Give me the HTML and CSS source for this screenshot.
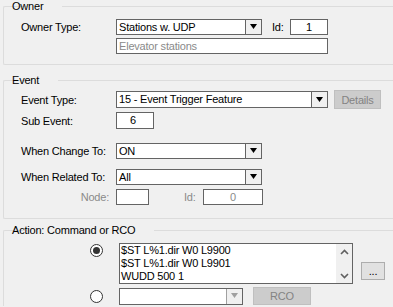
FILE: index.html
```html
<!DOCTYPE html>
<html lang="en">

<head>
    <meta charset="UTF-8">
    <title>Event Trigger</title>
    <link rel="stylesheet" href="styles.css">
</head>

<body>
    <fieldset class="group owner">
        <legend>Owner</legend>
        <div class="row">
            <span class="label">Owner Type:</span>
            <div class="combo w-146">
                <span class="combo-text">Stations w. UDP</span>
                <span class="combo-btn"><svg width="7" height="6" viewBox="0 0 7 6"><path d="M0 0h7L3.5 5z" fill="#000"/></svg></span>
            </div>
            <span class="id-label">Id:</span>
            <div class="box id-box">1</div>
        </div>
        <div class="row row-desc">
            <div class="box desc">Elevator stations</div>
        </div>
    </fieldset>

    <fieldset class="group event">
        <legend>Event</legend>
        <div class="row">
            <span class="label">Event Type:</span>
            <div class="combo w-211 tall">
                <span class="combo-text">15 - Event Trigger Feature</span>
                <span class="combo-btn"><svg width="7" height="6" viewBox="0 0 7 6"><path d="M0 0h7L3.5 5z" fill="#000"/></svg></span>
            </div>
            <button class="btn disabled details">Details</button>
        </div>
        <div class="row">
            <span class="label">Sub Event:</span>
            <div class="box sub-box">6</div>
        </div>
        <div class="row spaced">
            <span class="label">When Change To:</span>
            <div class="combo w-146">
                <span class="combo-text">ON</span>
                <span class="combo-btn"><svg width="7" height="6" viewBox="0 0 7 6"><path d="M0 0h7L3.5 5z" fill="#000"/></svg></span>
            </div>
        </div>
        <div class="row spaced2">
            <span class="label">When Related To:</span>
            <div class="combo w-146">
                <span class="combo-text">All</span>
                <span class="combo-btn"><svg width="7" height="6" viewBox="0 0 7 6"><path d="M0 0h7L3.5 5z" fill="#000"/></svg></span>
            </div>
        </div>
        <div class="row">
            <span class="label muted right">Node:</span>
            <div class="box node-box"></div>
            <span class="muted node-id">Id:</span>
            <div class="box zero-box">0</div>
        </div>
    </fieldset>

    <fieldset class="group action">
        <legend>Action: Command or RCO</legend>
        <div class="row cmd-row">
            <span class="radio checked"></span>
            <div class="box cmd">
                <div class="cmd-text">$ST L%1.dir W0 L9900<br>$ST L%1.dir W0 L9901<br>WUDD 500 1</div>
                <div class="scroll">
                    <svg width="9" height="6" viewBox="0 0 9 6"><path d="M1 5L4.5 1.5L8 5" fill="none" stroke="#606060" stroke-width="1.6"/></svg>
                    <svg width="9" height="6" viewBox="0 0 9 6"><path d="M1 1L4.5 4.5L8 1" fill="none" stroke="#606060" stroke-width="1.6"/></svg>
                </div>
            </div>
            <button class="btn dots">...</button>
        </div>
        <div class="row rco-row">
            <span class="radio"></span>
            <div class="combo w-123 tall">
                <span class="combo-text"></span>
                <span class="combo-btn off"><svg width="7" height="6" viewBox="0 0 7 6"><path d="M0 0h7L3.5 5z" fill="#a0a0a0"/></svg></span>
            </div>
            <button class="btn disabled rco">RCO</button>
        </div>
    </fieldset>
</body>

</html>
```

FILE: styles.css
```css
body {
    margin: 0;
    width: 393px;
    height: 307px;
    overflow: hidden;
    background-color: #f0f0f0;
    font-family: "Liberation Sans", Arial, sans-serif;
    font-size: 11px;
    letter-spacing: -0.2px;
    color: #000;
}

.group {
    margin: 0 0 0 3px;
    width: 390px;
    padding: 0 0 0 17px;
    border: 1px solid #dcdcdc;
    border-right: none;
    border-radius: 2px 0 0 2px;
    box-sizing: border-box;
}

.group legend {
    padding: 0 2px;
    margin-left: 6px;
    line-height: 13px;
    position: relative;
    left: -17px;
    margin-right: -17px;
}

.owner {
    margin-top: 0;
    padding-top: 6px;
    padding-bottom: 10px;
}

.event {
    margin-top: 9px;
    padding-top: 3px;
    padding-bottom: 10px;
}

.action {
    margin-top: 5px;
    padding-top: 6px;
    height: 82px;
    border-bottom: none;
    border-radius: 2px 0 0 0;
}

.row {
    display: flex;
    align-items: center;
    margin-bottom: 3px;
}

.row-desc {
    padding-left: 95px;
    margin-bottom: 0;
}

.spaced {
    margin-top: 14px;
    margin-bottom: 10px;
}

.spaced2 {
    margin-bottom: 4px;
}

.label {
    width: 95px;
    flex: none;
}

.right {
    width: 88px;
    text-align: right;
    margin-right: 7px;
}

.muted {
    color: #8a8a8a;
}

.box {
    box-sizing: border-box;
    height: 16px;
    border: 1px solid #646464;
    background-color: #fff;
    line-height: 14px;
    padding: 0 2px;
    flex: none;
}

.combo {
    box-sizing: border-box;
    height: 16px;
    border: 1px solid #646464;
    background-color: #fff;
    display: flex;
    flex: none;
}

.combo.tall {
    height: 17px;
}

.combo-text {
    flex: 1;
    padding-left: 2px;
    line-height: 14px;
}

.combo.tall .combo-text {
    line-height: 15px;
}

.combo-btn {
    width: 15px;
    border-left: 1px solid #646464;
    background-color: #f0f0f0;
    display: flex;
    align-items: center;
    justify-content: center;
}

.combo-btn.off {
    border-left-color: #a0a0a0;
}

.w-146 {
    width: 146px;
}

.w-211 {
    width: 212px;
}

.w-123 {
    width: 124px;
}

.id-label {
    margin-left: 10px;
    width: 18px;
}

.id-box {
    width: 38px;
    text-align: center;
}

.desc {
    width: 212px;
    color: #8a8a8a;
}

.sub-box {
    width: 38px;
    height: 17px;
    padding-left: 13px;
}

.node-box {
    width: 33px;
}

.node-id {
    margin-left: 35px;
    width: 19px;
}

.zero-box {
    width: 60px;
    text-align: center;
    color: #8a8a8a;
}

.btn {
    font-family: inherit;
    font-size: 11px;
    letter-spacing: inherit;
    box-sizing: border-box;
    padding: 0;
    border: 1px solid #adadad;
    background-color: #e1e1e1;
    color: #000;
}

.btn.disabled {
    background-color: #cccccc;
    border-color: #bfbfbf;
    color: #838383;
}

.details {
    width: 47px;
    height: 19px;
    margin-left: 6px;
}

.radio {
    width: 13px;
    height: 13px;
    box-sizing: border-box;
    border: 1px solid #333;
    border-radius: 50%;
    background-color: #fff;
    margin-left: 69px;
    margin-right: 16px;
    flex: none;
    display: flex;
    align-items: center;
    justify-content: center;
}

.radio.checked::after {
    content: "";
    width: 7px;
    height: 7px;
    border-radius: 50%;
    background-color: #333;
}

.cmd-row {
    align-items: flex-start;
    margin-bottom: 3px;
}

.cmd-row .radio {
    margin-top: 1px;
}

.cmd {
    width: 234px;
    height: 41px;
    padding: 0;
    display: flex;
}

.cmd-text {
    flex: 1;
    padding: 0 0 0 1px;
    line-height: 13px;
}

.scroll {
    width: 16px;
    background-color: #f0f0f0;
    display: flex;
    flex-direction: column;
    justify-content: space-between;
    align-items: center;
    padding: 5px 0 4px;
}

.dots {
    width: 24px;
    height: 18px;
    margin-left: 8px;
    margin-top: 19px;
}

.rco-row {
    margin-top: 0;
}

.rco {
    width: 58px;
    height: 18px;
    margin-left: 10px;
}
```
